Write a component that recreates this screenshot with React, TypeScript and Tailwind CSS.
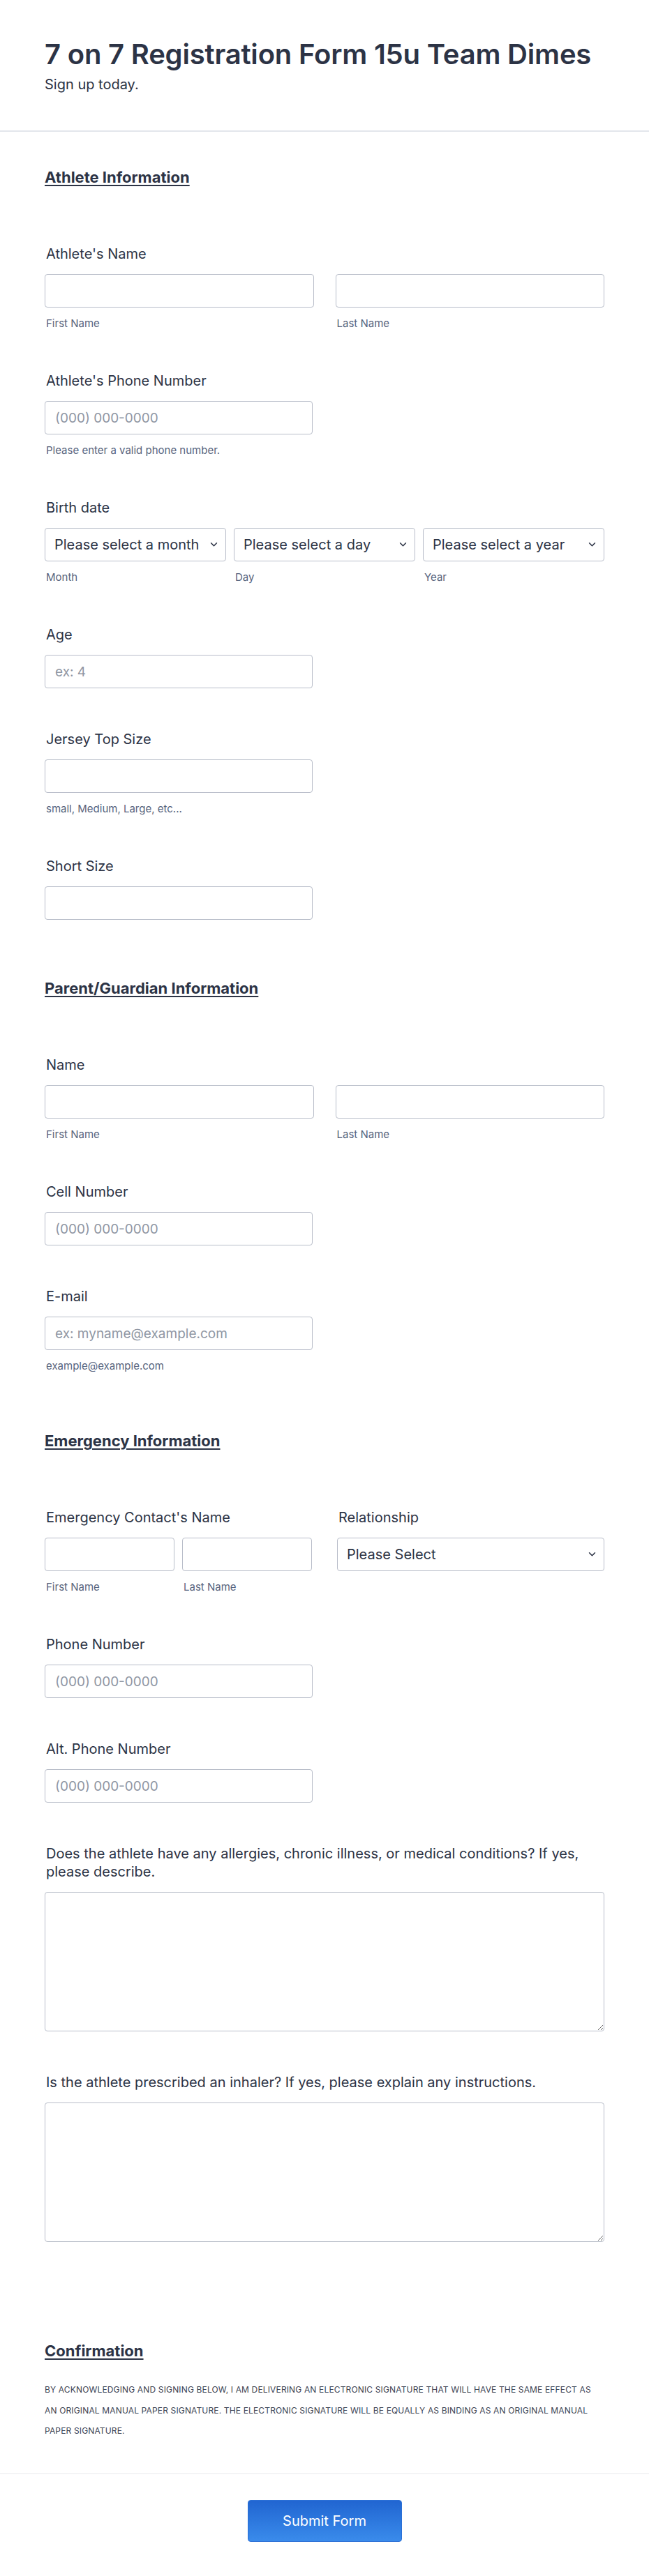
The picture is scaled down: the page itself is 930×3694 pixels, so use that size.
import React from "react";

const ink = "text-[#2c3345]";

function Label({ children }: { children: React.ReactNode }) {
  return <label className={`ml-[2px] block text-[20px] leading-[26px] font-normal ${ink}`}>{children}</label>;
}

function Sub({ children }: { children: React.ReactNode }) {
  return <div className="mt-[14px] ml-[2px] text-[15px] leading-[18px] text-[#57647e]">{children}</div>;
}

function TextInput({ placeholder }: { placeholder?: string }) {
  return (
    <input
      type="text"
      placeholder={placeholder}
      className={`h-[48px] w-full rounded-[4px] border border-[#b8bdc9] bg-white px-[14px] text-[19px] ${ink} outline-none placeholder:text-[#8f96a3]`}
    />
  );
}

function Chevron() {
  return (
    <svg
      aria-hidden
      viewBox="0 0 12 8"
      className="pointer-events-none absolute top-1/2 right-[12px] h-[7px] w-[11px] -translate-y-1/2"
    >
      <polyline points="1.5,1.5 6,6 10.5,1.5" fill="none" stroke="#2c3345" strokeWidth="1.8" strokeLinecap="round" strokeLinejoin="round" />
    </svg>
  );
}

function Select({ text }: { text: string }) {
  return (
    <div className="relative">
      <select
        defaultValue=""
        className={`h-[48px] w-full appearance-none rounded-[4px] border border-[#b8bdc9] bg-white pr-[30px] pl-[13px] text-[20px] ${ink} outline-none`}
      >
        <option value="">{text}</option>
      </select>
      <Chevron />
    </div>
  );
}

function Heading({ children }: { children: React.ReactNode }) {
  return (
    <div className="pt-[23px] pb-[82px]">
      <h2 className={`text-[22px] leading-[30px] font-bold underline decoration-[1.5px] underline-offset-[3px] ${ink}`}>
        {children}
      </h2>
    </div>
  );
}

function Field({ children }: { children: React.ReactNode }) {
  return <div className="pb-[60px]">{children}</div>;
}

function NameField({ label }: { label: string }) {
  return (
    <Field>
      <Label>{label}</Label>
      <div className="mt-4 grid grid-cols-2 gap-x-[31px]">
        <div>
          <TextInput />
          <Sub>First Name</Sub>
        </div>
        <div>
          <TextInput />
          <Sub>Last Name</Sub>
        </div>
      </div>
    </Field>
  );
}

function SingleField({ label, placeholder, sub }: { label: string; placeholder?: string; sub?: string }) {
  return (
    <Field>
      <Label>{label}</Label>
      <div className="mt-4 w-[384px]">
        <TextInput placeholder={placeholder} />
        {sub ? <Sub>{sub}</Sub> : null}
      </div>
    </Field>
  );
}

function AreaField({ label }: { label: string }) {
  return (
    <Field>
      <Label>{label}</Label>
      <textarea className={`mt-4 block h-[200px] w-full rounded-[4px] border border-[#b8bdc9] bg-white px-[14px] py-[10px] text-[19px] ${ink} outline-none`} />
    </Field>
  );
}

export default function App() {
  return (
    <div className="w-full bg-white font-['Inter','Noto_Sans',sans-serif]">
      <header className="border-b-2 border-[#e3e6ec] px-[64px] pt-[54px] pb-[53px]">
        <h1 className={`text-[40px] leading-[48px] font-semibold tracking-[-0.2px] ${ink}`}>
          7 on 7 Registration Form 15u Team Dimes
        </h1>
        <p className={`mt-[6px] text-[20px] leading-[26px] ${ink}`}>Sign up today.</p>
      </header>

      <main className="px-[64px] pt-[27px]">
        <Heading>Athlete Information</Heading>
        <NameField label="Athlete's Name" />
        <SingleField label="Athlete's Phone Number" placeholder="(000) 000-0000" sub="Please enter a valid phone number." />

        <Field>
          <Label>Birth date</Label>
          <div className="mt-4 grid grid-cols-3 gap-x-[11px]">
            <div>
              <Select text="Please select a month" />
              <Sub>Month</Sub>
            </div>
            <div>
              <Select text="Please select a day" />
              <Sub>Day</Sub>
            </div>
            <div>
              <Select text="Please select a year" />
              <Sub>Year</Sub>
            </div>
          </div>
        </Field>

        <SingleField label="Age" placeholder="ex: 4" />
        <SingleField label="Jersey Top Size" sub="small, Medium, Large, etc..." />
        <SingleField label="Short Size" />

        <Heading>Parent/Guardian Information</Heading>
        <NameField label="Name" />
        <SingleField label="Cell Number" placeholder="(000) 000-0000" />
        <SingleField label="E-mail" placeholder="ex: myname@example.com" sub="example@example.com" />

        <Heading>Emergency Information</Heading>
        <Field>
          <div className="grid grid-cols-2 gap-x-[36px]">
            <div>
              <Label>Emergency Contact's Name</Label>
              <div className="mt-4 grid grid-cols-2 gap-x-[11px]">
                <div>
                  <TextInput />
                  <Sub>First Name</Sub>
                </div>
                <div>
                  <TextInput />
                  <Sub>Last Name</Sub>
                </div>
              </div>
            </div>
            <div>
              <Label>Relationship</Label>
              <div className="mt-4">
                <Select text="Please Select" />
              </div>
            </div>
          </div>
        </Field>
        <SingleField label="Phone Number" placeholder="(000) 000-0000" />
        <SingleField label="Alt. Phone Number" placeholder="(000) 000-0000" />
        <AreaField label="Does the athlete have any allergies, chronic illness, or medical conditions? If yes, please describe." />
        <AreaField label="Is the athlete prescribed an inhaler? If yes, please explain any instructions." />

        <div className="pt-[81px]">
          <h2 className={`text-[22px] leading-[30px] font-bold underline decoration-[1.5px] underline-offset-[3px] ${ink}`}>
            Confirmation
          </h2>
          <p className={`mt-[26px] pb-[46px] text-[12px] leading-[29.5px] tracking-[0.15px] text-[#3b4252]`}>
            BY ACKNOWLEDGING AND SIGNING BELOW, I AM DELIVERING AN ELECTRONIC SIGNATURE THAT WILL HAVE THE SAME EFFECT AS AN
            ORIGINAL MANUAL PAPER SIGNATURE. THE ELECTRONIC SIGNATURE WILL BE EQUALLY AS BINDING AS AN ORIGINAL MANUAL PAPER
            SIGNATURE.
          </p>
        </div>
      </main>

      <footer className="flex justify-center border-t border-[#e8e9ec] pt-[37px] pb-[49px]">
        <button
          type="button"
          className="h-[60px] w-[221px] rounded-[4px] border border-[#2a6fd6] bg-gradient-to-b from-[#2165d1] to-[#3a8beb] text-[20px] font-normal text-white"
        >
          Submit Form
        </button>
      </footer>
    </div>
  );
}
